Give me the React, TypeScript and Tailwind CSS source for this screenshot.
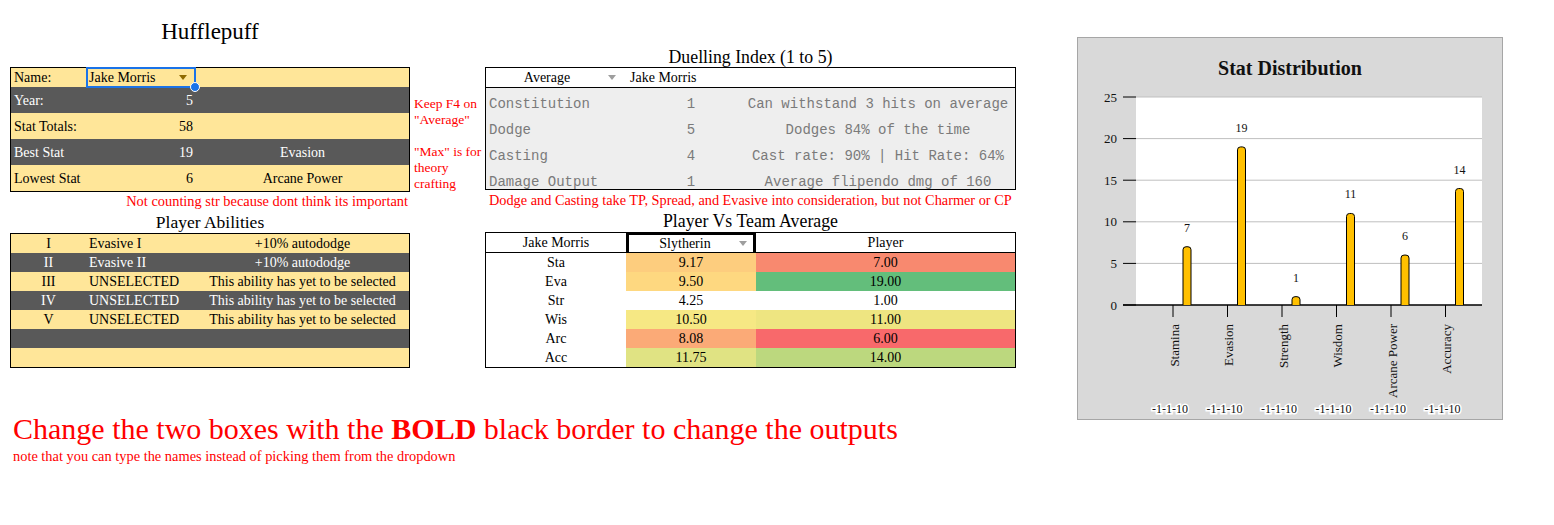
import React from 'react'

const serif = "font-['Liberation_Serif',serif]"
const mono = "font-['Liberation_Mono',monospace]"

const light = 'bg-[#FFE699] text-black'
const dark = 'bg-[#595959] text-white'

const summaryRows = [
  { label: 'Year:', value: '5', extra: '', tone: dark },
  { label: 'Stat Totals:', value: '58', extra: '', tone: light },
  { label: 'Best Stat', value: '19', extra: 'Evasion', tone: dark },
  { label: 'Lowest Stat', value: '6', extra: 'Arcane Power', tone: light },
]

const abilities = [
  { num: 'I', name: 'Evasive I', desc: '+10% autododge', tone: light },
  { num: 'II', name: 'Evasive II', desc: '+10% autododge', tone: dark },
  { num: 'III', name: 'UNSELECTED', desc: 'This ability has yet to be selected', tone: light },
  { num: 'IV', name: 'UNSELECTED', desc: 'This ability has yet to be selected', tone: dark },
  { num: 'V', name: 'UNSELECTED', desc: 'This ability has yet to be selected', tone: light },
  { num: '', name: '', desc: '', tone: dark },
  { num: '', name: '', desc: '', tone: light },
]

const duelling = [
  { label: 'Constitution', score: '1', desc: 'Can withstand 3 hits on average' },
  { label: 'Dodge', score: '5', desc: 'Dodges 84% of the time' },
  { label: 'Casting', score: '4', desc: 'Cast rate: 90% | Hit Rate: 64%' },
  { label: 'Damage Output', score: '1', desc: 'Average flipendo dmg of 160' },
]

const versus = [
  { stat: 'Sta', team: '9.17', player: '7.00', teamBg: 'bg-[#FDCD7E]', playerBg: 'bg-[#F8896F]' },
  { stat: 'Eva', team: '9.50', player: '19.00', teamBg: 'bg-[#FED880]', playerBg: 'bg-[#63BE7B]' },
  { stat: 'Str', team: '4.25', player: '1.00', teamBg: 'bg-white', playerBg: 'bg-white' },
  { stat: 'Wis', team: '10.50', player: '11.00', teamBg: 'bg-[#F6E884]', playerBg: 'bg-[#EEE581]' },
  { stat: 'Arc', team: '8.08', player: '6.00', teamBg: 'bg-[#FBAA77]', playerBg: 'bg-[#F8696B]' },
  { stat: 'Acc', team: '11.75', player: '14.00', teamBg: 'bg-[#E0E383]', playerBg: 'bg-[#BCD87E]' },
]

const stats = [
  { name: 'Stamina', value: 7 },
  { name: 'Evasion', value: 19 },
  { name: 'Strength', value: 1 },
  { name: 'Wisdom', value: 11 },
  { name: 'Arcane Power', value: 6 },
  { name: 'Accuracy', value: 14 },
]

function Caret({ color }: { color: string }) {
  return (
    <svg width="8" height="5" viewBox="0 0 8 5">
      <path d="M0 0 H8 L4 5 Z" fill={color} />
    </svg>
  )
}

function StatChart() {
  const base = 267
  const unit = 8.32
  return (
    <div className="mt-[37px] h-[383px] w-[426px] shrink-0 border border-[#A6A6A6] bg-[#D9D9D9]">
      <svg width="424" height="381" className={serif}>
        <text x="212" y="37" textAnchor="middle" fontWeight="bold" fontSize="20" fill="#111">
          Stat Distribution
        </text>
        <rect x="58" y="59" width="346" height="208" fill="white" />
        {[5, 10, 15, 20, 25].map((v) => (
          <line key={v} x1="58" x2="404" y1={base - v * unit} y2={base - v * unit} stroke="#BFBFBF" />
        ))}
        {[0, 5, 10, 15, 20, 25].map((v) => (
          <g key={v}>
            <line x1="45" x2="58" y1={base - v * unit} y2={base - v * unit} stroke="#000" />
            <text x="39" y={base - v * unit} dominantBaseline="central" textAnchor="end" fontSize="13" fill="#111">
              {v}
            </text>
          </g>
        ))}
        <line x1="45" x2="404" y1={base} y2={base} stroke="#000" strokeWidth="1.3" />
        {stats.map((s, i) => {
          const tick = 95 + i * 54.5
          const bx = tick + 10
          const w = 8
          const top = base - s.value * unit
          const r = Math.min(3, (base - top) / 2)
          return (
            <g key={s.name}>
              <line x1={tick} x2={tick} y1={base} y2={base + 12} stroke="#000" />
              <path
                d={`M${bx} ${base} V${top + r} Q${bx} ${top} ${bx + r} ${top} H${bx + w - r} Q${bx + w} ${top} ${bx + w} ${top + r} V${base}`}
                fill="#FFC000"
                stroke="#000"
                strokeWidth="1"
              />
              <text x={bx + w / 2} y={top - 15} textAnchor="middle" fontSize="12" fill="#111">
                {s.value}
              </text>
              <text
                transform={`translate(${tick + 1},286) rotate(-90)`}
                textAnchor="end"
                dominantBaseline="central"
                fontSize="13"
                fill="#111"
              >
                {s.name}
              </text>
              <text
                x={tick - 3}
                y="375"
                textAnchor="middle"
                fontSize="12"
                fill="#111"
                stroke="white"
                strokeWidth="3"
                paintOrder="stroke"
              >
                -1-1-10
              </text>
            </g>
          )
        })}
      </svg>
    </div>
  )
}

export default function App() {
  return (
    <div className={`flex h-[525px] w-[1554px] bg-white text-black ${serif}`}>
      <div className="flex flex-col pl-[10px]">
        <div className="flex">
          {/* left column */}
          <div className="w-[400px] shrink-0">
            <div className="h-[67px] pt-[20px] text-center text-[23px] leading-[23px]">Hufflepuff</div>
            <div className="border border-black text-[14px]">
              <div className={`flex h-[19px] items-center ${light}`}>
                <div className="w-[75px] pl-[3px]">Name:</div>
                <div className="relative -mt-[1px] flex h-[21px] w-[110px] items-center border-2 border-[#1A73E8] pl-[1px] pr-[7px]">
                  <span className="flex-1">Jake Morris</span>
                  <Caret color="#8F6A00" />
                  <span className="absolute -bottom-[6px] -right-[6px] h-[10px] w-[10px] rounded-full border border-white bg-[#1A73E8]" />
                </div>
              </div>
              {summaryRows.map((row) => (
                <div key={row.label} className={`flex h-[26px] items-center ${row.tone}`}>
                  <div className="w-[75px] pl-[3px]">{row.label}</div>
                  <div className="w-[110px] pr-[3px] text-right">{row.value}</div>
                  <div className="flex-1 text-center">{row.extra}</div>
                </div>
              ))}
            </div>
            <div className="h-[18px] whitespace-nowrap pr-[2px] text-right text-[14.4px] leading-[18px] text-[#FF0000]">
              Not counting str because dont think its important
            </div>
            <div className="h-[23px] pt-[2px] text-center text-[17.5px] leading-[20px]">Player Abilities</div>
            <div className="border border-black text-[14px]">
              {abilities.map((a, i) => (
                <div key={i} className={`flex h-[19px] items-center ${a.tone}`}>
                  <div className="w-[75px] text-center">{a.num}</div>
                  <div className="w-[110px] pl-[3px]">{a.name}</div>
                  <div className="flex-1 text-center">{a.desc}</div>
                </div>
              ))}
            </div>
          </div>

          {/* side notes */}
          <div className="w-[75px] shrink-0 whitespace-nowrap pl-[4px] pt-[96px] text-[13.5px] leading-[16px] text-[#FF0000]">
            <div>Keep F4 on</div>
            <div>"Average"</div>
            <div className="mt-[16px]">"Max" is for</div>
            <div>theory</div>
            <div>crafting</div>
          </div>

          {/* middle column */}
          <div className="w-[531px] shrink-0">
            <div className="h-[67px] pt-[47px] text-center text-[17.8px] leading-[20px]">Duelling Index (1 to 5)</div>
            <div className="border border-black">
              <div className="flex h-[20px] items-center border-b border-black bg-white text-[14px]">
                <div className="flex w-[142px] items-center">
                  <span className="w-[122px] text-center">Average</span>
                  <Caret color="#9E9E9E" />
                </div>
                <span className="pl-[2px]">Jake Morris</span>
              </div>
              <div className={`h-[101px] overflow-hidden bg-[#EEEEEE] pl-[3px] pt-[3px] text-[14px] text-[#7A7A7A] ${mono}`}>
                {duelling.map((d) => (
                  <div key={d.label} className="grid h-[26px] grid-cols-[152px_100px_1fr] items-center">
                    <span>{d.label}</span>
                    <span className="text-center">{d.score}</span>
                    <span className="text-center">{d.desc}</span>
                  </div>
                ))}
              </div>
            </div>
            <div className="h-[20px] whitespace-nowrap pl-[4px] text-[14.3px] leading-[20px] text-[#FF0000]">
              Dodge and Casting take TP, Spread, and Evasive into consideration, but not Charmer or CP
            </div>
            <div className="h-[22px] pt-[1px] text-center text-[17.8px] leading-[20px]">Player Vs Team Average</div>
            <div className="border border-black text-[14px]">
              <div className="flex h-[20px] items-stretch border-b border-black bg-white">
                <div className="flex w-[140px] items-center justify-center">Jake Morris</div>
                <div className="-my-[1px] flex h-[23px] w-[130px] items-center border-[3px] border-black pl-[2px] pr-[6px]">
                  <span className="flex-1 text-center">Slytherin</span>
                  <Caret color="#9E9E9E" />
                </div>
                <div className="flex flex-1 items-center justify-center">Player</div>
              </div>
              {versus.map((v) => (
                <div key={v.stat} className="flex h-[19px] items-center">
                  <div className="flex h-full w-[140px] items-center justify-center bg-white">{v.stat}</div>
                  <div className={`flex h-full w-[130px] items-center justify-center ${v.teamBg}`}>{v.team}</div>
                  <div className={`flex h-full flex-1 items-center justify-center ${v.playerBg}`}>{v.player}</div>
                </div>
              ))}
            </div>
          </div>
        </div>

        <div className="mt-[45px] whitespace-nowrap pl-[3px] text-[30px] leading-[32px] text-[#FF0000]">
          Change the two boxes with the <span className="font-bold">BOLD</span> black border to change the outputs
        </div>
        <div className="mt-[4px] whitespace-nowrap pl-[3px] text-[14.4px] leading-[15px] text-[#FF0000]">
          note that you can type the names instead of picking them from the dropdown
        </div>
      </div>

      <div className="ml-[61px]">
        <StatChart />
      </div>
    </div>
  )
}
